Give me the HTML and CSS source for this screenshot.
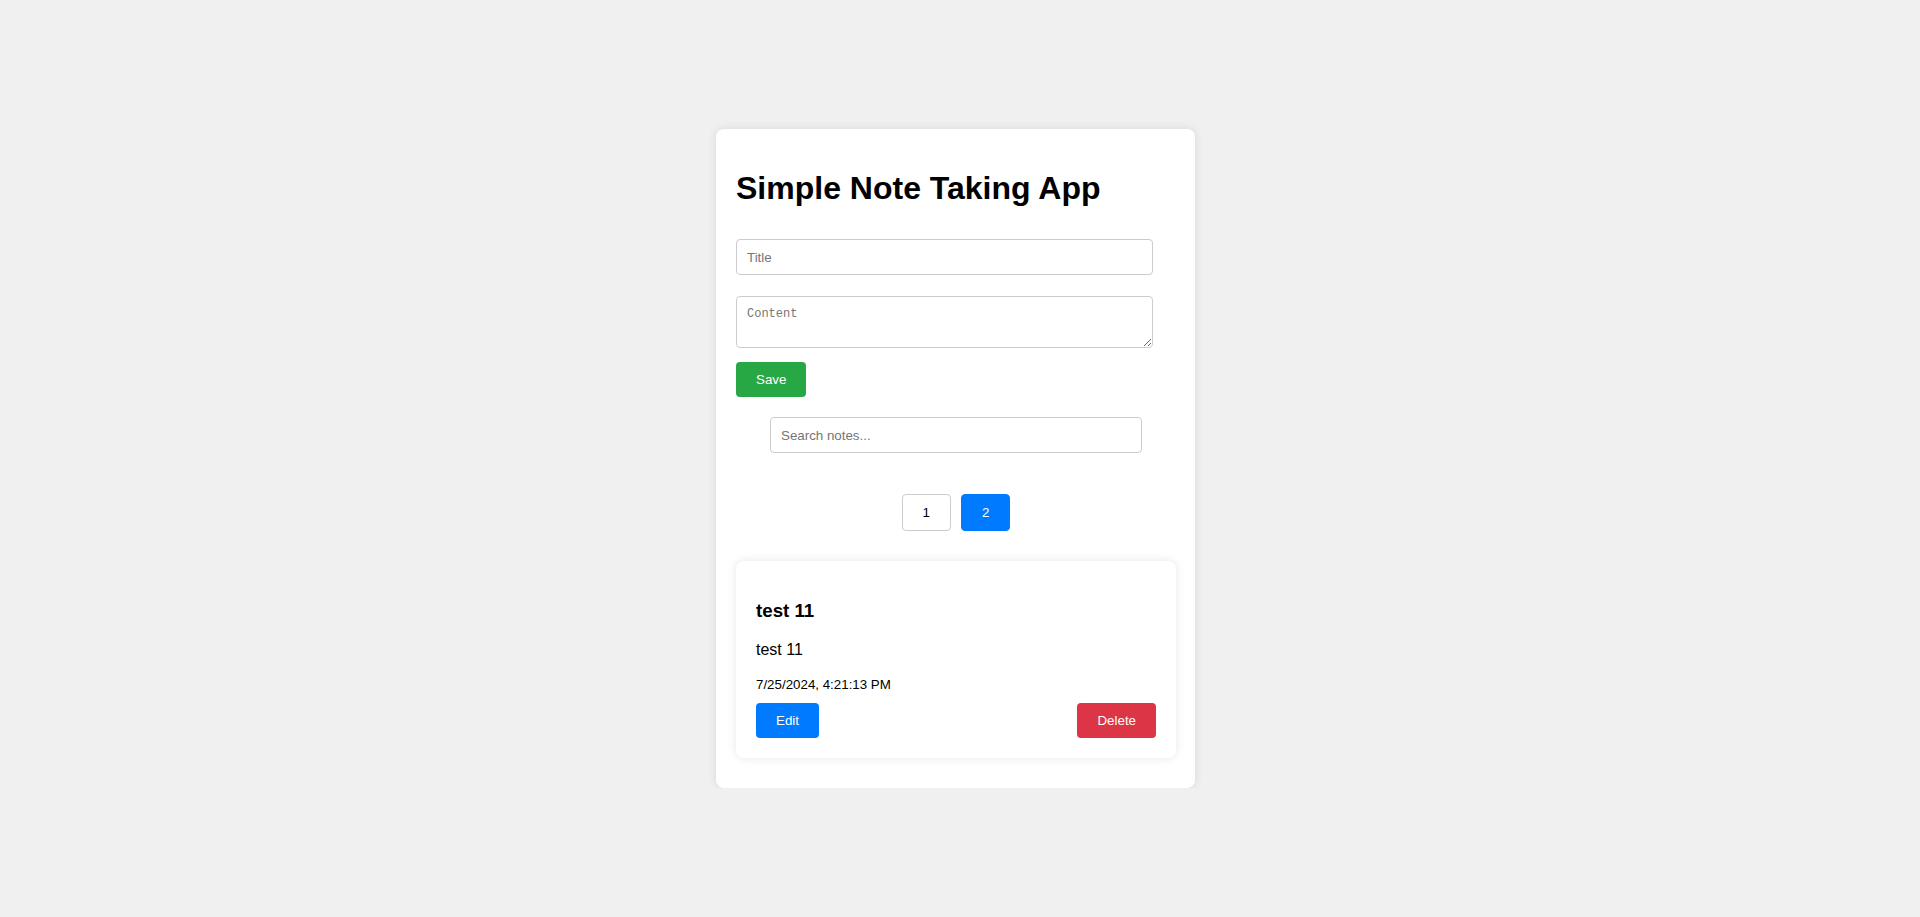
FILE: index.html
```html
<!DOCTYPE html>
<html lang="en">
<head>
<meta charset="utf-8">
<title>Simple Note Taking App</title>
<link rel="stylesheet" href="styles.css">
</head>
<body>
<div class="app">
  <h1 class="app-title">Simple Note Taking App</h1>
  <form class="note-form">
    <input class="field title-field" type="text" placeholder="Title">
    <textarea class="field content-field" placeholder="Content"></textarea>
    <button type="button" class="btn btn-save">Save</button>
  </form>
  <input class="field search-field" type="text" placeholder="Search notes...">
  <div class="pagination">
    <button type="button" class="page-btn">1</button>
    <button type="button" class="page-btn active">2</button>
  </div>
  <div class="note">
    <h3 class="note-title">test 11</h3>
    <p class="note-content">test 11</p>
    <p class="note-date"><small>7/25/2024, 4:21:13 PM</small></p>
    <div class="note-actions">
      <button type="button" class="btn btn-edit">Edit</button>
      <button type="button" class="btn btn-delete">Delete</button>
    </div>
  </div>
</div>
</body>
</html>
```
FILE: styles.css
```css
* { box-sizing: border-box; }

body {
  margin: 0;
  padding: 0 9px 0 0;
  background: #f0f0f0;
  font-family: "Liberation Sans", Arial, sans-serif;
  color: #000;
}

.app {
  width: 479px;
  margin: 129px auto 0;
  padding: 20px 19px 20px 20px;
  background: #fff;
  border-radius: 8px;
  box-shadow: 0 0 10px rgba(0, 0, 0, 0.1);
  display: flex;
  flex-direction: column;
}

.app-title {
  font-size: 32px;
  font-weight: bold;
  margin: 21px 0 0;
  line-height: normal;
}

.note-form {
  display: flex;
  flex-direction: column;
  align-items: flex-start;
  margin-top: 32px;
}

.field {
  border: 1px solid #ccc;
  border-radius: 4px;
  padding: 10px;
  font-family: "Liberation Sans", Arial, sans-serif;
  font-size: 13.333px;
  color: #000;
  background: #fff;
  outline: none;
}

.field::placeholder { color: #757575; }

.title-field {
  width: 417px;
  height: 36px;
}

.content-field {
  width: 417px;
  height: 52px;
  margin-top: 21px;
  font-family: "Liberation Mono", monospace;
  font-size: 12px;
  line-height: 15px;
  resize: vertical;
}

.btn {
  border: none;
  border-radius: 4px;
  padding: 10px 20px;
  font-family: "Liberation Sans", Arial, sans-serif;
  font-size: 13.333px;
  line-height: 15px;
  color: #fff;
  cursor: pointer;
}

.btn-save {
  background: #28a745;
  margin-top: 14px;
}

.search-field {
  align-self: center;
  width: 372px;
  height: 36px;
  margin-top: 20px;
}

.pagination {
  display: flex;
  justify-content: center;
  gap: 10px;
  margin-top: 41px;
}

.page-btn {
  border: 1px solid #ccc;
  border-radius: 4px;
  background: #fff;
  padding: 10px 20px;
  font-family: "Liberation Sans", Arial, sans-serif;
  font-size: 13.333px;
  line-height: 15px;
  color: #000;
  cursor: pointer;
}

.page-btn.active {
  background: #007bff;
  border-color: #007bff;
  color: #fff;
}

.note {
  margin-top: 30px;
  margin-bottom: 10px;
  padding: 20px;
  background: #fff;
  border-radius: 8px;
  box-shadow: 0 0 10px rgba(0, 0, 0, 0.1);
}

.note-title {
  font-size: 18.72px;
  font-weight: bold;
  margin: 18.72px 0 0;
  line-height: normal;
}

.note-content {
  font-size: 16px;
  margin: 19px 0 0;
  line-height: normal;
}

.note-date {
  font-size: 16px;
  margin: 16px 0 0;
  line-height: normal;
}

.note-date small { font-size: 13.333px; }

.note-actions {
  display: flex;
  justify-content: space-between;
  margin-top: 10px;
}

.btn-edit { background: #007bff; }
.btn-delete { background: #dc3545; }
```
